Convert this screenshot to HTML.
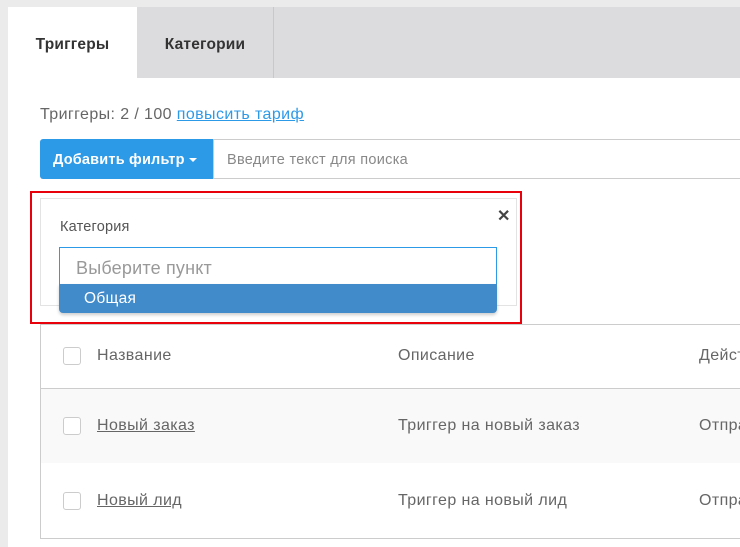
<!DOCTYPE html>
<html><head><meta charset="utf-8"><style>
*{box-sizing:border-box;margin:0;padding:0}
html,body{overflow:hidden}
body{width:740px;height:547px;background:#ebebeb;font-family:"Liberation Sans",sans-serif;position:relative;color:#555}
#wrap{position:absolute;left:0;top:0;width:740px;height:547px;overflow:hidden}
.card{position:absolute;left:8px;top:7px;width:732px;height:540px;background:#fff}
.tabbar{position:absolute;left:8px;top:7px;width:732px;height:71px;background:#dcdcde}
.tab{position:absolute;top:0;height:71px;line-height:76px;font-size:15.5px;font-weight:bold;color:#333;text-align:center;letter-spacing:0.2px}
.a{position:absolute;white-space:nowrap}
.t{font-size:16px;letter-spacing:0.4px;color:#666}
.cb{position:absolute;left:63px;width:18px;height:18px;border:1px solid #ccc;border-radius:3px;background:#fff}
</style></head><body><div id="wrap">
<div class="card"></div>
<div class="tabbar">
 <div class="tab" style="left:0;width:129px;background:#fff;">Триггеры</div>
 <div class="tab" style="left:129px;width:137px;border-right:1px solid #c8c8c8;">Категории</div>
</div>
<div class="a t" style="left:40px;top:106px;">Триггеры: 2 / 100 <span style="color:#2d9ae8;text-decoration:underline">повысить тариф</span></div>
<div class="a" style="left:40px;top:139px;width:174px;height:40px;background:#2d9ae8;border-radius:3px 0 0 3px;color:#fff;font-weight:bold;font-size:14.5px;line-height:42px;padding-left:13px;letter-spacing:0.2px">Добавить фильтр <span style="display:inline-block;border-left:4px solid transparent;border-right:4px solid transparent;border-top:4px solid #fff;vertical-align:middle"></span></div>
<div class="a" style="left:213px;top:139px;width:527px;height:40px;border:1px solid #ccc;border-right:none;font-size:14.5px;line-height:40px;padding-left:13px;color:#888;letter-spacing:0.3px">Введите текст для поиска</div>
<div class="a" style="left:40px;top:198px;width:477px;height:108px;border:1px solid #e3e3e3;background:#fff"></div>
<div class="a" style="left:60px;top:219px;font-size:14.5px;color:#555;letter-spacing:0.2px">Категория</div>
<div class="a" style="left:497px;top:206px;font-size:16px;font-weight:bold;color:#444">✕</div>
<div class="a" style="left:59px;top:247px;width:438px;height:38px;border:1px solid #2d9ae8;font-size:18px;line-height:40px;padding-left:16px;color:#999;letter-spacing:0.2px">Выберите пункт</div>
<div class="a" style="left:59px;top:284px;width:438px;height:29px;background:#428bca;border-radius:0 0 4px 4px;box-shadow:0 2px 3px rgba(0,0,0,.2);color:#fff;font-size:15.5px;line-height:30px;padding-left:25px;letter-spacing:0.3px">Общая</div>
<div class="a" style="left:30px;top:191px;width:492px;height:133px;border:2px solid #e8000b"></div>
<div class="a" style="left:40px;top:324px;width:700px;height:215px;border:1px solid #ccc;border-right:none"></div>
<div class="a" style="left:41px;top:388px;width:699px;height:1px;background:#ccc"></div>
<div class="a" style="left:41px;top:389px;width:699px;height:74px;background:#f9f9f9"></div>
<div class="cb" style="top:347px"></div>
<div class="cb" style="top:417px"></div>
<div class="cb" style="top:492px"></div>
<div class="a t" style="left:97px;top:347px;">Название</div>
<div class="a t" style="left:398px;top:347px;">Описание</div>
<div class="a t" style="left:699px;top:347px;width:41px;overflow:hidden">Действия</div>
<div class="a t" style="left:97px;top:417px;text-decoration:underline">Новый заказ</div>
<div class="a t" style="left:398px;top:417px;">Триггер на новый заказ</div>
<div class="a t" style="left:699px;top:417px;width:41px;overflow:hidden">Отправить</div>
<div class="a t" style="left:97px;top:492px;text-decoration:underline">Новый лид</div>
<div class="a t" style="left:398px;top:492px;">Триггер на новый лид</div>
<div class="a t" style="left:699px;top:492px;width:41px;overflow:hidden">Отправить</div>
</div></body></html>
